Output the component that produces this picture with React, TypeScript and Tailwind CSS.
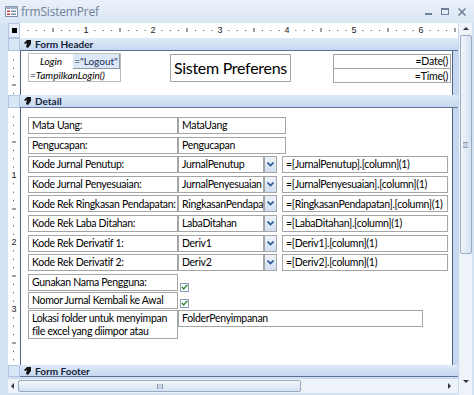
import React from "react";

const FONT = "font-['Lato','Open_Sans',sans-serif]";

// horizontal ruler: 8 subdivisions per inch, 67px per inch
const HRuler = () => {
  const marks = [];
  for (let i = 1; i < 53; i++) {
    const x = -1 + i * 8.375;
    if (i % 8 === 0) {
      marks.push(
        <text key={i} x={x} y={10} fontSize="9" textAnchor="middle" fill="#222" fontFamily="Liberation Sans, sans-serif">
          {i / 8}
        </text>
      );
    } else if (i % 4 === 0) {
      marks.push(<rect key={i} x={x} y={5} width={1} height={4} fill="#444" />);
    } else {
      marks.push(<rect key={i} x={x} y={7} width={1} height={1} fill="#444" />);
    }
  }
  return (
    <svg width="438" height="15" className="block bg-white">
      {marks}
    </svg>
  );
};

const VRuler = ({ h, labels }: { h: number; labels: boolean }) => {
  const marks = [];
  for (let i = 1; i * 8.375 < h; i++) {
    const y = i * 8.375;
    if (i % 8 === 0 && labels) {
      marks.push(
        <text key={i} x={6} y={y + 3} fontSize="9" textAnchor="middle" fill="#222" fontFamily="Liberation Sans, sans-serif">
          {i / 8}
        </text>
      );
    } else if (i % 4 === 0) {
      marks.push(<rect key={i} x={4} y={y} width={4} height={1} fill="#444" />);
    } else {
      marks.push(<rect key={i} x={5} y={y} width={1} height={1} fill="#444" />);
    }
  }
  return (
    <svg width="12" height={h} className="block bg-white shrink-0">
      {marks}
    </svg>
  );
};

const SectionIcon = () => (
  <svg width="8" height="8" viewBox="0 0 8 8" className="shrink-0">
    <path d="M7 0 L3 0 L0 3 L1 4 L3 3 L2 7 L4 8 L7 4 Z" fill="#111" />
  </svg>
);

const SectionBar = ({ title, h }: { title: string; h: string }) => (
  <div className={`flex ${h}`}>
    <div className="w-[12px] shrink-0 bg-[#d9e6f6] border border-[#aec4e2]" />
    <div className="flex-1 flex items-center gap-[3px] pl-[4px] bg-gradient-to-b from-[#dfeaf8] to-[#c6d8f0] border-b border-[#5a7096]">
      <SectionIcon />
      <span className="text-[10px] font-bold text-[#15233a] leading-none">{title}</span>
    </div>
  </div>
);

const Box = ({ w, children, className = "" }: { w: string; children?: React.ReactNode; className?: string }) => (
  <div className={`${w} h-[17px] shrink-0 border border-[#a5a5a5] bg-white flex items-center pl-[3px] text-[10.5px] tracking-[-0.3px] text-black leading-none whitespace-nowrap overflow-hidden ${className}`}>
    {children}
  </div>
);

const ComboArrow = () => (
  <div className="w-[13px] h-[17px] shrink-0 border border-[#a5a5a5] bg-gradient-to-b from-[#eef3fa] to-[#d2dff0] flex items-center justify-center">
    <svg width="7" height="5" viewBox="0 0 7 5">
      <path d="M0.5 0.5 L3.5 3.5 L6.5 0.5" stroke="#2b5797" strokeWidth="1.6" fill="none" />
    </svg>
  </div>
);

const Check = () => (
  <div className="w-[9px] h-[9px] border border-[#8d9cb0] bg-white flex items-center justify-center">
    <svg width="7" height="6" viewBox="0 0 7 6">
      <path d="M0.8 3 L2.7 5 L6.3 0.8" stroke="#2e8b3e" strokeWidth="1.4" fill="none" />
    </svg>
  </div>
);

type Row = { label: string; field: string; expr?: string };

const rows: Row[] = [
  { label: "Mata Uang:", field: "MataUang" },
  { label: "Pengucapan:", field: "Pengucapan" },
  { label: "Kode Jurnal Penutup:", field: "JurnalPenutup", expr: "=[JurnalPenutup].[column](1)" },
  { label: "Kode Jurnal Penyesuaian:", field: "JurnalPenyesuaian", expr: "=[JurnalPenyesuaian].[column](1)" },
  { label: "Kode Rek Ringkasan Pendapatan:", field: "RingkasanPendapatan", expr: "=[RingkasanPendapatan].[column](1)" },
  { label: "Kode Rek Laba Ditahan:", field: "LabaDitahan", expr: "=[LabaDitahan].[column](1)" },
  { label: "Kode Rek Derivatif 1:", field: "Deriv1", expr: "=[Deriv1].[column](1)" },
  { label: "Kode Rek Derivatif 2:", field: "Deriv2", expr: "=[Deriv2].[column](1)" },
];

export default function App() {
  return (
    <div className={`w-[474px] h-[395px] bg-[#d3e1f2] overflow-hidden ${FONT}`}>
      {/* title bar */}
      <div className="h-[23px] flex items-center bg-gradient-to-b from-[#eaf1fa] to-[#dbe6f4] relative">
        <svg width="13" height="11" viewBox="0 0 13 11" className="ml-[5px]">
          <rect x="0.5" y="0.5" width="12" height="10" fill="#fff" stroke="#7d8da6" />
          <rect x="0.5" y="0.5" width="12" height="2.5" fill="#9fb0c8" />
          <rect x="2" y="4.5" width="3" height="1.5" fill="#b04040" />
          <rect x="6" y="4.5" width="5" height="1.5" fill="#7d8da6" />
          <rect x="2" y="7.5" width="3" height="1.5" fill="#b04040" />
          <rect x="6" y="7.5" width="5" height="1.5" fill="#7d8da6" />
        </svg>
        <span className="ml-[3px] text-[12px] text-[#6f7f97] font-['Open_Sans',sans-serif] tracking-[-0.2px]">frmSistemPref</span>
        <div className="ml-auto mr-[8px] flex items-center gap-[9px] text-[#6f7f97]">
          <div className="w-[7px] h-[2px] bg-[#6f7f97] mt-[4px]" />
          <div className="w-[8px] h-[7px] border border-[#6f7f97] border-t-2" />
          <svg width="8" height="8" viewBox="0 0 8 8">
            <path d="M0.5 0.5 L7.5 7.5 M7.5 0.5 L0.5 7.5" stroke="#6f7f97" strokeWidth="1.5" />
          </svg>
        </div>
      </div>

      <div className="flex ml-[8px] h-[372px]">
        <div className="w-[450px] flex flex-col">
          {/* top ruler */}
          <div className="flex h-[15px]">
            <div className="w-[12px] bg-[#e6eef9] border border-[#b3c7e2] flex items-center justify-center">
              <div className="w-[5px] h-[5px] bg-black" />
            </div>
            <HRuler />
          </div>

          <SectionBar title="Form Header" h="h-[13px]" />

          {/* header section */}
          <div className="flex h-[44px]">
            <VRuler h={44} labels={false} />
            <div className="w-[433px] bg-white border-l border-r border-[#4f627f] relative flex items-start pt-[2px] pl-[7px]">
              <div className="w-[93px] h-[29px] border border-[#bdbdbd] flex flex-col">
                <div className="flex h-[15px]">
                  <div className="w-[44px] flex items-center justify-center text-[10px] italic text-black">Login</div>
                  <div className="flex-1 bg-[#dce8f7] border-r border-b border-[#8e99a8] flex items-center justify-center text-[10px] text-[#1d2a5a]">="Logout"</div>
                </div>
                <div className="flex-1 flex items-center pl-[1px] text-[10px] italic text-black leading-none">=TampilkanLogin()</div>
              </div>
              <div className="ml-[49px] mt-[1px] w-[121px] h-[28px] border border-[#a5a5a5] flex items-center pl-[3px] text-[16px] tracking-[-0.3px] text-black leading-none whitespace-nowrap">
                Sistem Preferens
              </div>
              <div className="ml-[42px] mt-[1px] w-[118px] h-[29px] border border-[#a5a5a5] flex flex-col text-[10.5px] tracking-[-0.2px] text-black">
                <div className="h-[14px] border-b border-[#a5a5a5] flex items-center justify-end pr-[2px]">=Date()</div>
                <div className="flex-1 flex items-center justify-end pr-[2px]">=Time()</div>
              </div>
            </div>
            <div className="w-[5px] bg-[#c6d8f0]" />
          </div>

          <SectionBar title="Detail" h="h-[13px]" />

          {/* detail section */}
          <div className="flex h-[257px]">
            <VRuler h={257} labels={true} />
            <div className="w-[433px] bg-white border-l border-r border-[#4f627f] pt-[9px] pl-[7px] flex flex-col">
              {rows.map((r) => (
                <div key={r.label} className="h-[19.6px] flex shrink-0">
                  <Box w="w-[150px]">{r.label}</Box>
                  {r.expr ? (
                    <>
                      <Box w="w-[86px]">{r.field}</Box>
                      <ComboArrow />
                      <Box w="w-[166px]" className="ml-[5px]">{r.expr}</Box>
                    </>
                  ) : (
                    <Box w="w-[108px]">{r.field}</Box>
                  )}
                </div>
              ))}
              <div className="h-[18px] flex shrink-0">
                <Box w="w-[150px]" className="h-[16px]">Gunakan Nama Pengguna:</Box>
                <div className="ml-[2px] mt-[9px]"><Check /></div>
              </div>
              <div className="h-[18px] flex shrink-0">
                <Box w="w-[150px]" className="h-[16px]">Nomor Jurnal Kembali ke Awal</Box>
                <div className="ml-[2px] mt-[7px]"><Check /></div>
              </div>
              <div className="flex shrink-0">
                <div className="w-[150px] h-[29px] border border-[#a5a5a5] pl-[3px] pt-[1px] text-[10.5px] tracking-[-0.3px] leading-[13px] text-black overflow-hidden">
                  Lokasi folder untuk menyimpan file excel yang diimpor atau
                </div>
                <Box w="w-[245px]" className="h-[15px]">FolderPenyimpanan</Box>
              </div>
            </div>
            <div className="w-[5px] bg-[#c6d8f0]" />
          </div>

          <SectionBar title="Form Footer" h="h-[12px]" />

          {/* horizontal scrollbar */}
          <div className="h-[15px] mt-[1px] flex items-center bg-[#eef3fa] border-t border-[#c9d7ea]">
            <svg width="10" height="14" viewBox="0 0 10 14" className="shrink-0">
              <path d="M3 7 L6 4 L6 10 Z" fill="#333" />
            </svg>
            <div className="w-[283px] h-[12px] rounded-[2px] border border-[#98abc5] bg-gradient-to-b from-[#f2f6fb] to-[#d5e0ee] flex items-center justify-center">
              <div className="w-[6px] h-[5px] border-x border-[#8b9bb3] bg-[#c4d1e3]" />
            </div>
            <svg width="10" height="14" viewBox="0 0 10 14" className="ml-auto mr-[4px] shrink-0">
              <path d="M7 7 L4 4 L4 10 Z" fill="#333" />
            </svg>
          </div>
        </div>

        {/* vertical scrollbar */}
        <div className="w-[14px] flex flex-col items-center bg-[#eef3fa] border-l border-[#c9d7ea]">
          <svg width="14" height="12" viewBox="0 0 14 12" className="shrink-0">
            <path d="M7 4 L4 7 L10 7 Z" fill="#333" />
          </svg>
          <div className="w-[12px] h-[219px] rounded-[2px] border border-[#98abc5] bg-gradient-to-r from-[#f2f6fb] to-[#d5e0ee] flex items-center justify-center">
            <div className="w-[5px] h-[6px] border-y border-[#8b9bb3] bg-[#c4d1e3]" />
          </div>
          <svg width="14" height="12" viewBox="0 0 14 12" className="mt-auto mb-[8px] shrink-0">
            <path d="M7 8 L4 5 L10 5 Z" fill="#333" />
          </svg>
        </div>
      </div>
    </div>
  );
}
